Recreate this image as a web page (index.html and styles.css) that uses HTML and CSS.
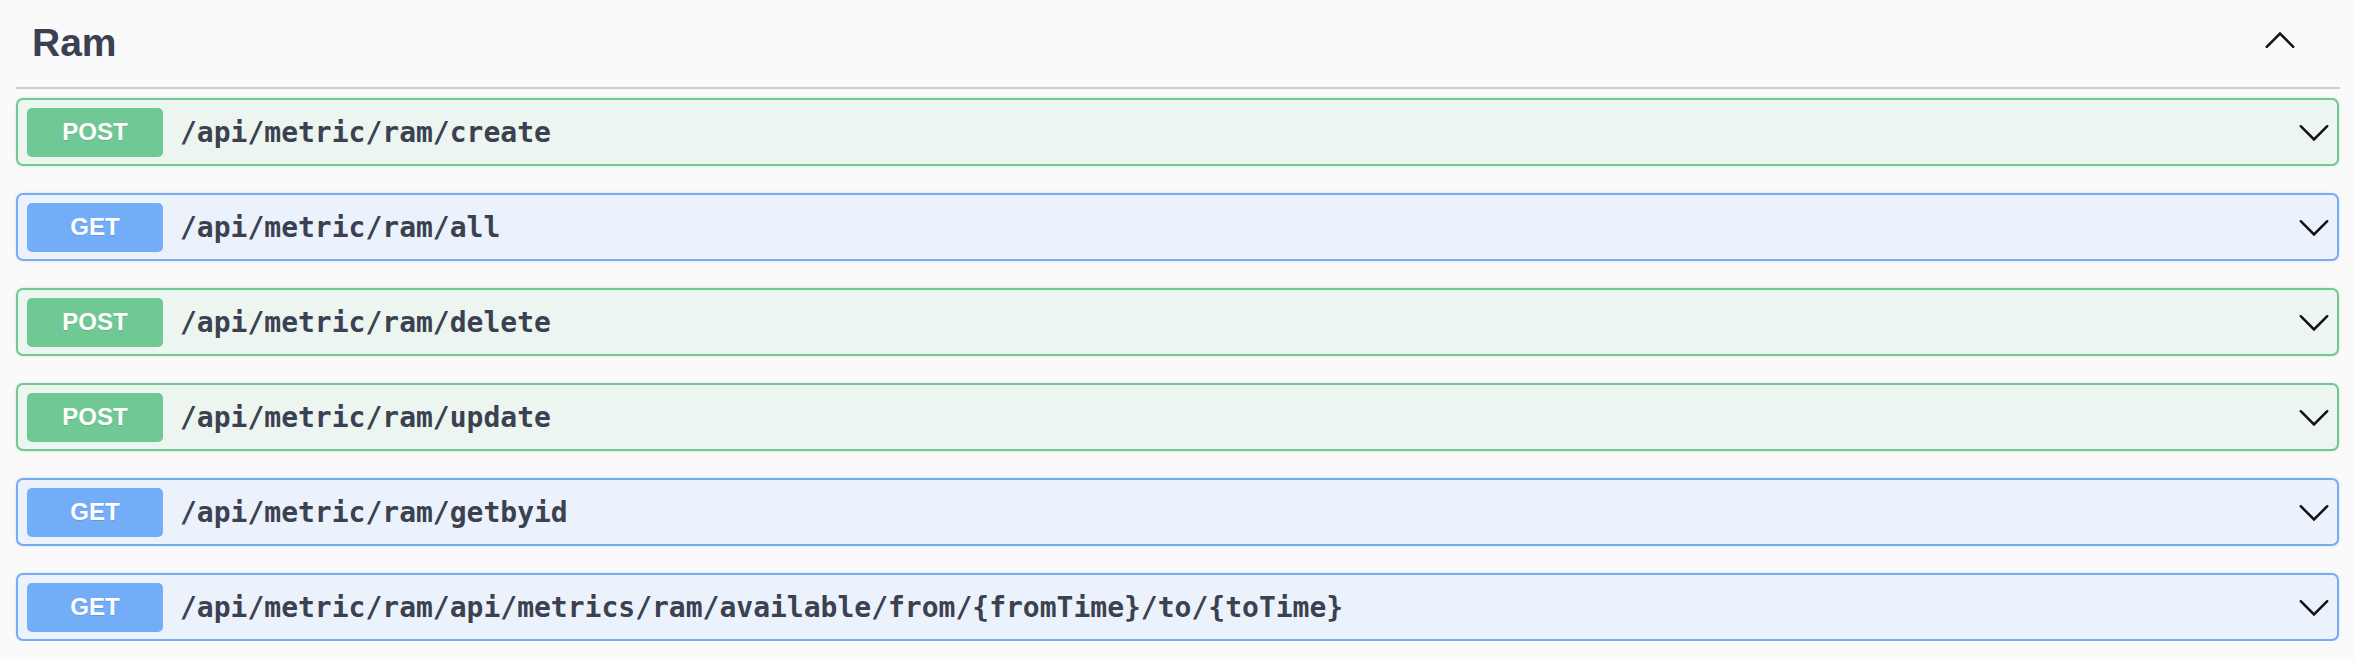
FILE: index.html
```html
<!DOCTYPE html>
<html>
<head>
<meta charset="utf-8">
<link rel="stylesheet" href="styles.css">
</head>
<body>
<div class="section">
  <div class="tag-header">
    <h3 class="tag-title">Ram</h3>
    <svg class="arrow arrow-up" viewBox="0 0 20 20"><polyline points="2.2,13.4 10,5.6 17.8,13.4"/></svg>
  </div>
  <div class="ops">
    <div class="op post"><span class="method">POST</span><span class="path">/api/metric/ram/create</span><svg class="arrow" viewBox="0 0 20 20"><polyline points="2.2,6.6 10,14.4 17.8,6.6"/></svg></div>
    <div class="op get"><span class="method">GET</span><span class="path">/api/metric/ram/all</span><svg class="arrow" viewBox="0 0 20 20"><polyline points="2.2,6.6 10,14.4 17.8,6.6"/></svg></div>
    <div class="op post"><span class="method">POST</span><span class="path">/api/metric/ram/delete</span><svg class="arrow" viewBox="0 0 20 20"><polyline points="2.2,6.6 10,14.4 17.8,6.6"/></svg></div>
    <div class="op post"><span class="method">POST</span><span class="path">/api/metric/ram/update</span><svg class="arrow" viewBox="0 0 20 20"><polyline points="2.2,6.6 10,14.4 17.8,6.6"/></svg></div>
    <div class="op get"><span class="method">GET</span><span class="path">/api/metric/ram/getbyid</span><svg class="arrow" viewBox="0 0 20 20"><polyline points="2.2,6.6 10,14.4 17.8,6.6"/></svg></div>
    <div class="op get"><span class="method">GET</span><span class="path">/api/metric/ram/api/metrics/ram/available/from/{fromTime}/to/{toTime}</span><svg class="arrow" viewBox="0 0 20 20"><polyline points="2.2,6.6 10,14.4 17.8,6.6"/></svg></div>
  </div>
</div>
</body>
</html>
```

FILE: styles.css
```css
html, body {
  margin: 0;
  padding: 0;
  background: #fafafa;
}

.section {
  padding: 0 15px 0 16px;
  font-family: "Liberation Sans", Arial, sans-serif;
  color: #3b4151;
}

.tag-header {
  display: flex;
  align-items: flex-start;
  justify-content: space-between;
  box-sizing: border-box;
  height: 89px;
  padding: 24px 43px 0 16px;
  border-bottom: 2px solid #cbccce;
  margin-right: -1px;
}

.tag-title {
  margin: 0;
  font-size: 39px;
  line-height: 38px;
  font-weight: bold;
  color: #3b4151;
}

.arrow {
  width: 34px;
  height: 34px;
  flex: none;
  fill: none;
  stroke: #111;
  stroke-width: 1.45;
  stroke-linecap: round;
  stroke-linejoin: miter;
}

.ops {
  display: flex;
  flex-direction: column;
  gap: 27px;
  padding-top: 9px;
}

.op {
  display: flex;
  align-items: center;
  box-sizing: border-box;
  height: 68px;
  padding: 0 6.5px 0 9px;
  border: 2px solid;
  border-radius: 7px;
  box-shadow: 0 0 3px rgba(0, 0, 0, 0.12);
}

.op.post {
  background: #ecf5ef;
  border-color: #70c994;
}

.op.get {
  background: #ebf2fb;
  border-color: #73adf8;
}

.method {
  flex: none;
  width: 136px;
  height: 49px;
  display: flex;
  align-items: center;
  justify-content: center;
  border-radius: 5px;
  color: #fff;
  font-size: 24px;
  font-weight: bold;
  text-shadow: 0 1px 0 rgba(0, 0, 0, 0.12);
}

.post .method {
  background: #70c994;
}

.get .method {
  background: #73adf8;
}

.path {
  flex: 1;
  padding-left: 17px;
  font-family: "DejaVu Sans Mono", "Liberation Mono", monospace;
  font-weight: bold;
  font-size: 28px;
  color: #3b4151;
}
```
